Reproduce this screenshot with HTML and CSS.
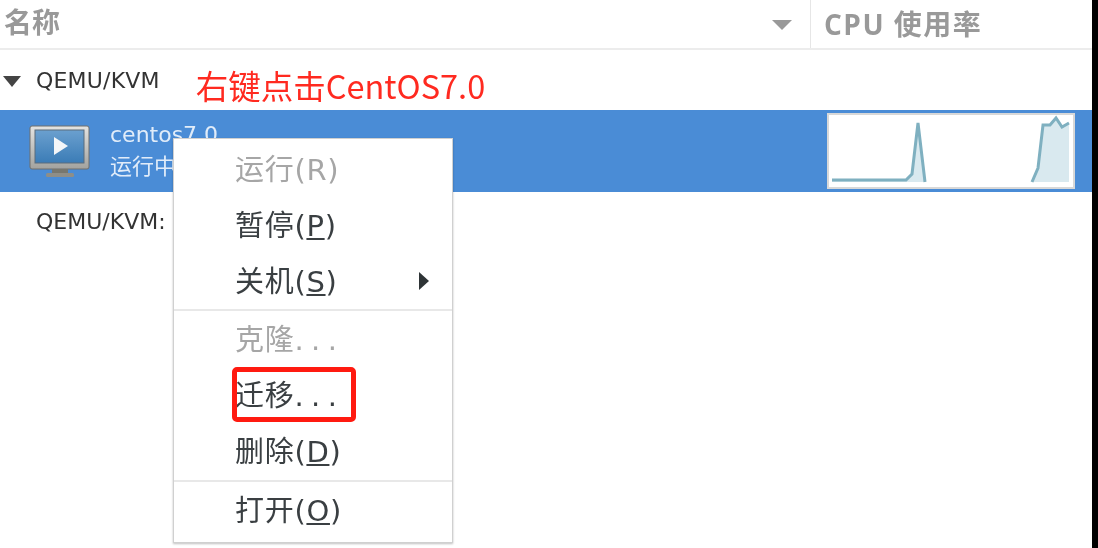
FILE: index.html
```html
<!DOCTYPE html>
<html lang="zh">
<head>
  <meta charset="UTF-8" />
  <title>虚拟系统管理器</title>
  <link rel="stylesheet" href="styles.css">
</head>
<body>
  <div class="window">
    <div class="header">
      <div class="col-name">
        <span>名称</span>
        <span class="sort-arrow"></span>
      </div>
      <div class="col-cpu">CPU 使用率</div>
    </div>

    <div class="group-row">
      <span class="expander"></span>
      <span class="group-name">QEMU/KVM</span>
      <span class="note">右键点击CentOS7.0</span>
    </div>

    <div class="vm-row">
      <svg class="vm-icon" width="64" height="54" viewBox="0 0 64 54">
        <defs>
          <linearGradient id="frame" x1="0" y1="0" x2="0" y2="1">
            <stop offset="0" stop-color="#e4e4e2" />
            <stop offset="1" stop-color="#a2a29e" />
          </linearGradient>
          <linearGradient id="screen" x1="0" y1="0" x2="0" y2="1">
            <stop offset="0" stop-color="#6ba0cf" />
            <stop offset="1" stop-color="#3b7cb6" />
          </linearGradient>
        </defs>
        <rect x="1" y="1" width="59" height="43" rx="2" fill="url(#frame)" stroke="#6f6f6c" />
        <rect x="6" y="5" width="49" height="33" fill="url(#screen)" stroke="#5b6d7d" />
        <path d="M25 12 L25 30 L39 21 Z" fill="#f4f6f8" />
        <rect x="23" y="44" width="16" height="4" fill="#77776f" />
        <rect x="17" y="48" width="28" height="4" rx="1.5" fill="#8e8e88" />
      </svg>
      <div class="vm-text">
        <div>centos7.0</div>
        <div>运行中</div>
      </div>
      <svg class="graph" width="248" height="76" viewBox="0 0 248 76">
        <path d="M5 67 L79 67 L85 61 L91 10 L98 69 L5 69 Z" fill="#d9e9ef" />
        <path d="M5 67 L79 67 L85 61 L91 10 L98 69" fill="none" stroke="#7fb0c0" stroke-width="3" />
        <path d="M205 69 L211 55 L216 12 L223 12 L229 5 L235 14 L242 10 L242 69 Z" fill="#d9e9ef" />
        <path d="M205 69 L211 55 L216 12 L223 12 L229 5 L235 14 L242 10" fill="none" stroke="#7fb0c0" stroke-width="3" />
      </svg>
    </div>

    <div class="plain-row">QEMU/KVM:</div>
  </div>
  <div class="edge"></div>

  <div class="menu">
    <div class="item off">运行(R)</div>
    <div class="item">暂停(<u>P</u>)</div>
    <div class="item">关机(<u>S</u>)<span class="submenu-arrow"></span></div>
    <div class="sep"></div>
    <div class="item off">克隆<span class="dots">...</span></div>
    <div class="item marked">迁移<span class="dots">...</span></div>
    <div class="item">删除(<u>D</u>)</div>
    <div class="sep"></div>
    <div class="item">打开(<u>O</u>)</div>
  </div>
</body>
</html>
```

FILE: styles.css
```css
html, body {
  margin: 0;
  height: 100%;
  overflow: hidden;
  background: #fff;
}
body {
  display: flex;
  font-family: "DejaVu Sans", "Noto Sans CJK SC", sans-serif;
  position: relative;
}
.window {
  flex: 1;
  filter: blur(0.5px);
}
.edge {
  width: 6px;
  background: #000;
}
.header {
  display: flex;
  height: 48px;
  border-bottom: 2px solid #ececec;
  color: #999;
  font-family: "Open Sans", "Noto Sans CJK SC", sans-serif;
  font-size: 28px;
  font-weight: bold;
}
.col-name {
  width: 811px;
  box-sizing: border-box;
  padding: 0 18px 6px 4px;
  display: flex;
  align-items: center;
  justify-content: space-between;
  border-right: 1px solid #e6e6e6;
}
.sort-arrow {
  width: 0;
  height: 0;
  margin-top: 8px;
  border-left: 10px solid transparent;
  border-right: 10px solid transparent;
  border-top: 10px solid #999;
}
.col-cpu {
  padding: 3px 0 0 13px;
  letter-spacing: 1.5px;
}
.group-row {
  height: 60px;
  box-sizing: border-box;
  display: flex;
  align-items: flex-start;
  padding: 18px 0 0 3px;
  font-size: 22px;
  color: #333;
}
.expander {
  width: 0;
  height: 0;
  margin-top: 8px;
  border-left: 9px solid transparent;
  border-right: 9px solid transparent;
  border-top: 11px solid #444;
}
.group-name {
  margin-left: 15px;
  line-height: 26px;
  letter-spacing: 0.2px;
}
.note {
  margin-left: 36px;
  color: #ff2a20;
  font-family: "Noto Sans CJK SC", sans-serif;
  font-size: 32.5px;
  line-height: 34px;
}
.vm-row {
  height: 82px;
  box-sizing: border-box;
  display: flex;
  align-items: center;
  background: #4a8cd6;
  padding: 0 17px 0 29px;
  color: #e1ecf9;
  font-size: 22px;
}
.vm-icon {
  flex: none;
  margin-top: 2px;
}
.vm-text {
  margin-left: 17px;
  line-height: 32px;
}
.graph {
  margin-left: auto;
  background: #fff;
  outline: 2px solid #d8d8d8;
  outline-offset: -2px;
}
.plain-row {
  padding: 16px 0 0 36px;
  font-size: 22px;
  line-height: 28px;
  color: #333;
}

/* context menu lies over the list */
.menu {
  position: absolute;
  left: 173px;
  top: 138px;
  width: 280px;
  height: 405px;
  box-sizing: border-box;
  padding-top: 2px;
  background: #fff;
  border: 1px solid #d0d0d0;
  box-shadow: 0 1px 2px rgba(0, 0, 0, 0.25);
  color: #3a3f42;
  font-size: 29px;
  letter-spacing: 0.7px;
  filter: blur(0.5px);
}
.item {
  position: relative;
  height: 56.1px;
  line-height: 59px;
  padding-left: 61px;
}
.item.off {
  color: #a6a6a6;
}
.dots {
  letter-spacing: 7.5px;
}
.sep {
  height: 2px;
  background: #e8e8e8;
}
.submenu-arrow {
  position: absolute;
  right: 23px;
  top: 19px;
  width: 0;
  height: 0;
  border-top: 9px solid transparent;
  border-bottom: 9px solid transparent;
  border-left: 10px solid #2e3436;
}
.item.marked::after {
  content: "";
  position: absolute;
  left: 58px;
  top: 0;
  width: 124px;
  height: 55px;
  box-sizing: border-box;
  border: 5px solid #ff1a10;
  border-radius: 5px;
}
```
